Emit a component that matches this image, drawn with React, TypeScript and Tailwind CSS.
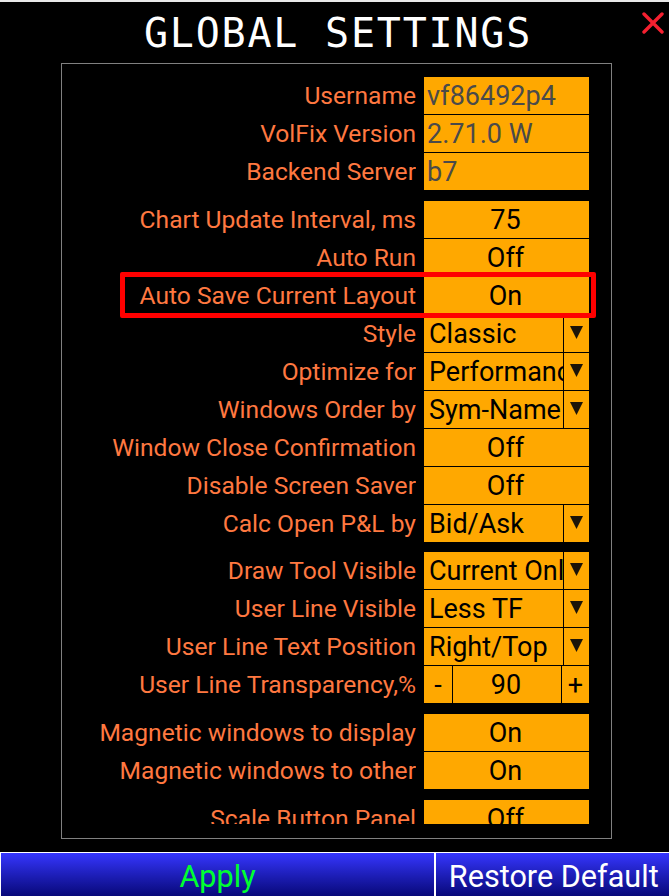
import React from 'react'

type Row = { label: string; value: string; kind: 'text' | 'toggle' | 'select' | 'step' }

const groups: Row[][] = [
  [
    { label: 'Username', value: 'vf86492p4', kind: 'text' },
    { label: 'VolFix Version', value: '2.71.0 W', kind: 'text' },
    { label: 'Backend Server', value: 'b7', kind: 'text' },
  ],
  [
    { label: 'Chart Update Interval, ms', value: '75', kind: 'toggle' },
    { label: 'Auto Run', value: 'Off', kind: 'toggle' },
    { label: 'Auto Save Current Layout', value: 'On', kind: 'toggle' },
    { label: 'Style', value: 'Classic', kind: 'select' },
    { label: 'Optimize for', value: 'Performance', kind: 'select' },
    { label: 'Windows Order by', value: 'Sym-Name', kind: 'select' },
    { label: 'Window Close Confirmation', value: 'Off', kind: 'toggle' },
    { label: 'Disable Screen Saver', value: 'Off', kind: 'toggle' },
    { label: 'Calc Open P&L by', value: 'Bid/Ask', kind: 'select' },
  ],
  [
    { label: 'Draw Tool Visible', value: 'Current Only', kind: 'select' },
    { label: 'User Line Visible', value: 'Less TF', kind: 'select' },
    { label: 'User Line Text Position', value: 'Right/Top', kind: 'select' },
    { label: 'User Line Transparency,%', value: '90', kind: 'step' },
  ],
  [
    { label: 'Magnetic windows to display', value: 'On', kind: 'toggle' },
    { label: 'Magnetic windows to other', value: 'On', kind: 'toggle' },
  ],
  [{ label: 'Scale Button Panel', value: 'Off', kind: 'toggle' }],
]

const Arrow = () => (
  <svg width="13" height="13" viewBox="0 0 13 13" className="mb-[3px]" fill="#1c1408">
    <path d="M0 0H13L6.5 13Z" />
  </svg>
)

const Control = ({ row }: { row: Row }) => {
  const box = 'h-[37px] w-[165px] shrink-0 overflow-hidden bg-[#ffa800] text-[27px] leading-[39px]'
  if (row.kind === 'text') return <div className={`${box} pl-[3px] text-[#4a4a4a]`}>{row.value}</div>
  if (row.kind === 'toggle') return <div className={`${box} pr-[2px] text-center text-black`}>{row.value}</div>
  if (row.kind === 'select')
    return (
      <div className={`${box} flex text-black`}>
        <div className="w-[140px] overflow-hidden whitespace-nowrap border-r border-black pl-[5px]">{row.value}</div>
        <div className="flex flex-1 items-center justify-center">
          <Arrow />
        </div>
      </div>
    )
  return (
    <div className={`${box} flex text-center text-black`}>
      <div className="w-[29px] border-r border-black">-</div>
      <div className="flex-1 pr-[2px]">{row.value}</div>
      <div className="w-[28px] border-l border-black">+</div>
    </div>
  )
}

export default function App() {
  return (
    <div className="relative flex h-[896px] w-[669px] flex-col overflow-hidden bg-black font-['Roboto',sans-serif] text-[24.6px]">
      <div className="h-[2px] bg-[#e8e8e8]" />
      <div className="relative flex h-[61px] items-start justify-center pl-[7px] pt-[7px]">
        <h1 className="font-['DejaVu_Sans_Mono',monospace] text-[40px] leading-[48px] tracking-[1.8px] text-white">GLOBAL SETTINGS</h1>
        <svg className="absolute left-[642px] top-[10px]" width="22" height="22" viewBox="0 0 22 22" fill="none" stroke="#f52030" strokeWidth="3.4" strokeLinecap="round">
          <path d="M2 2 20 20M20 2 2 20" />
        </svg>
      </div>
      <div className="mx-[61px] h-[776px] w-[551px] border border-[#808080] pt-[13px]">
        <div className="flex h-[747px] flex-col gap-[11px] overflow-hidden">
          {groups.map((group, i) => (
            <div key={i} className={i === 2 ? '-mt-px flex flex-col gap-[1px]' : 'flex flex-col gap-[1px]'}>
              {group.map((row) => (
                <div key={row.label} className="flex items-center gap-[8px]">
                  <div className="h-[37px] w-[354px] shrink-0 overflow-hidden whitespace-nowrap text-right leading-[38px] text-[#ff7840]">{row.label}</div>
                  <Control row={row} />
                </div>
              ))}
            </div>
          ))}
        </div>
      </div>
      <div className="mt-[13px] flex h-[44px] gap-[1.5px] bg-white pt-[1px] text-[30.6px] leading-[48px]">
        <button className="ml-[1px] w-[433px] bg-gradient-to-b from-[#3636ff] to-[#08087a] text-center text-[#00ff30]">Apply</button>
        <button className="flex-1 bg-gradient-to-b from-[#3636ff] to-[#08087a] pl-[3px] text-center text-white">Restore Default</button>
      </div>
      <div className="absolute left-[120px] top-[272px] h-[46px] w-[476px] rounded-[2px] border-[5px] border-[#ff0000]" />
    </div>
  )
}
